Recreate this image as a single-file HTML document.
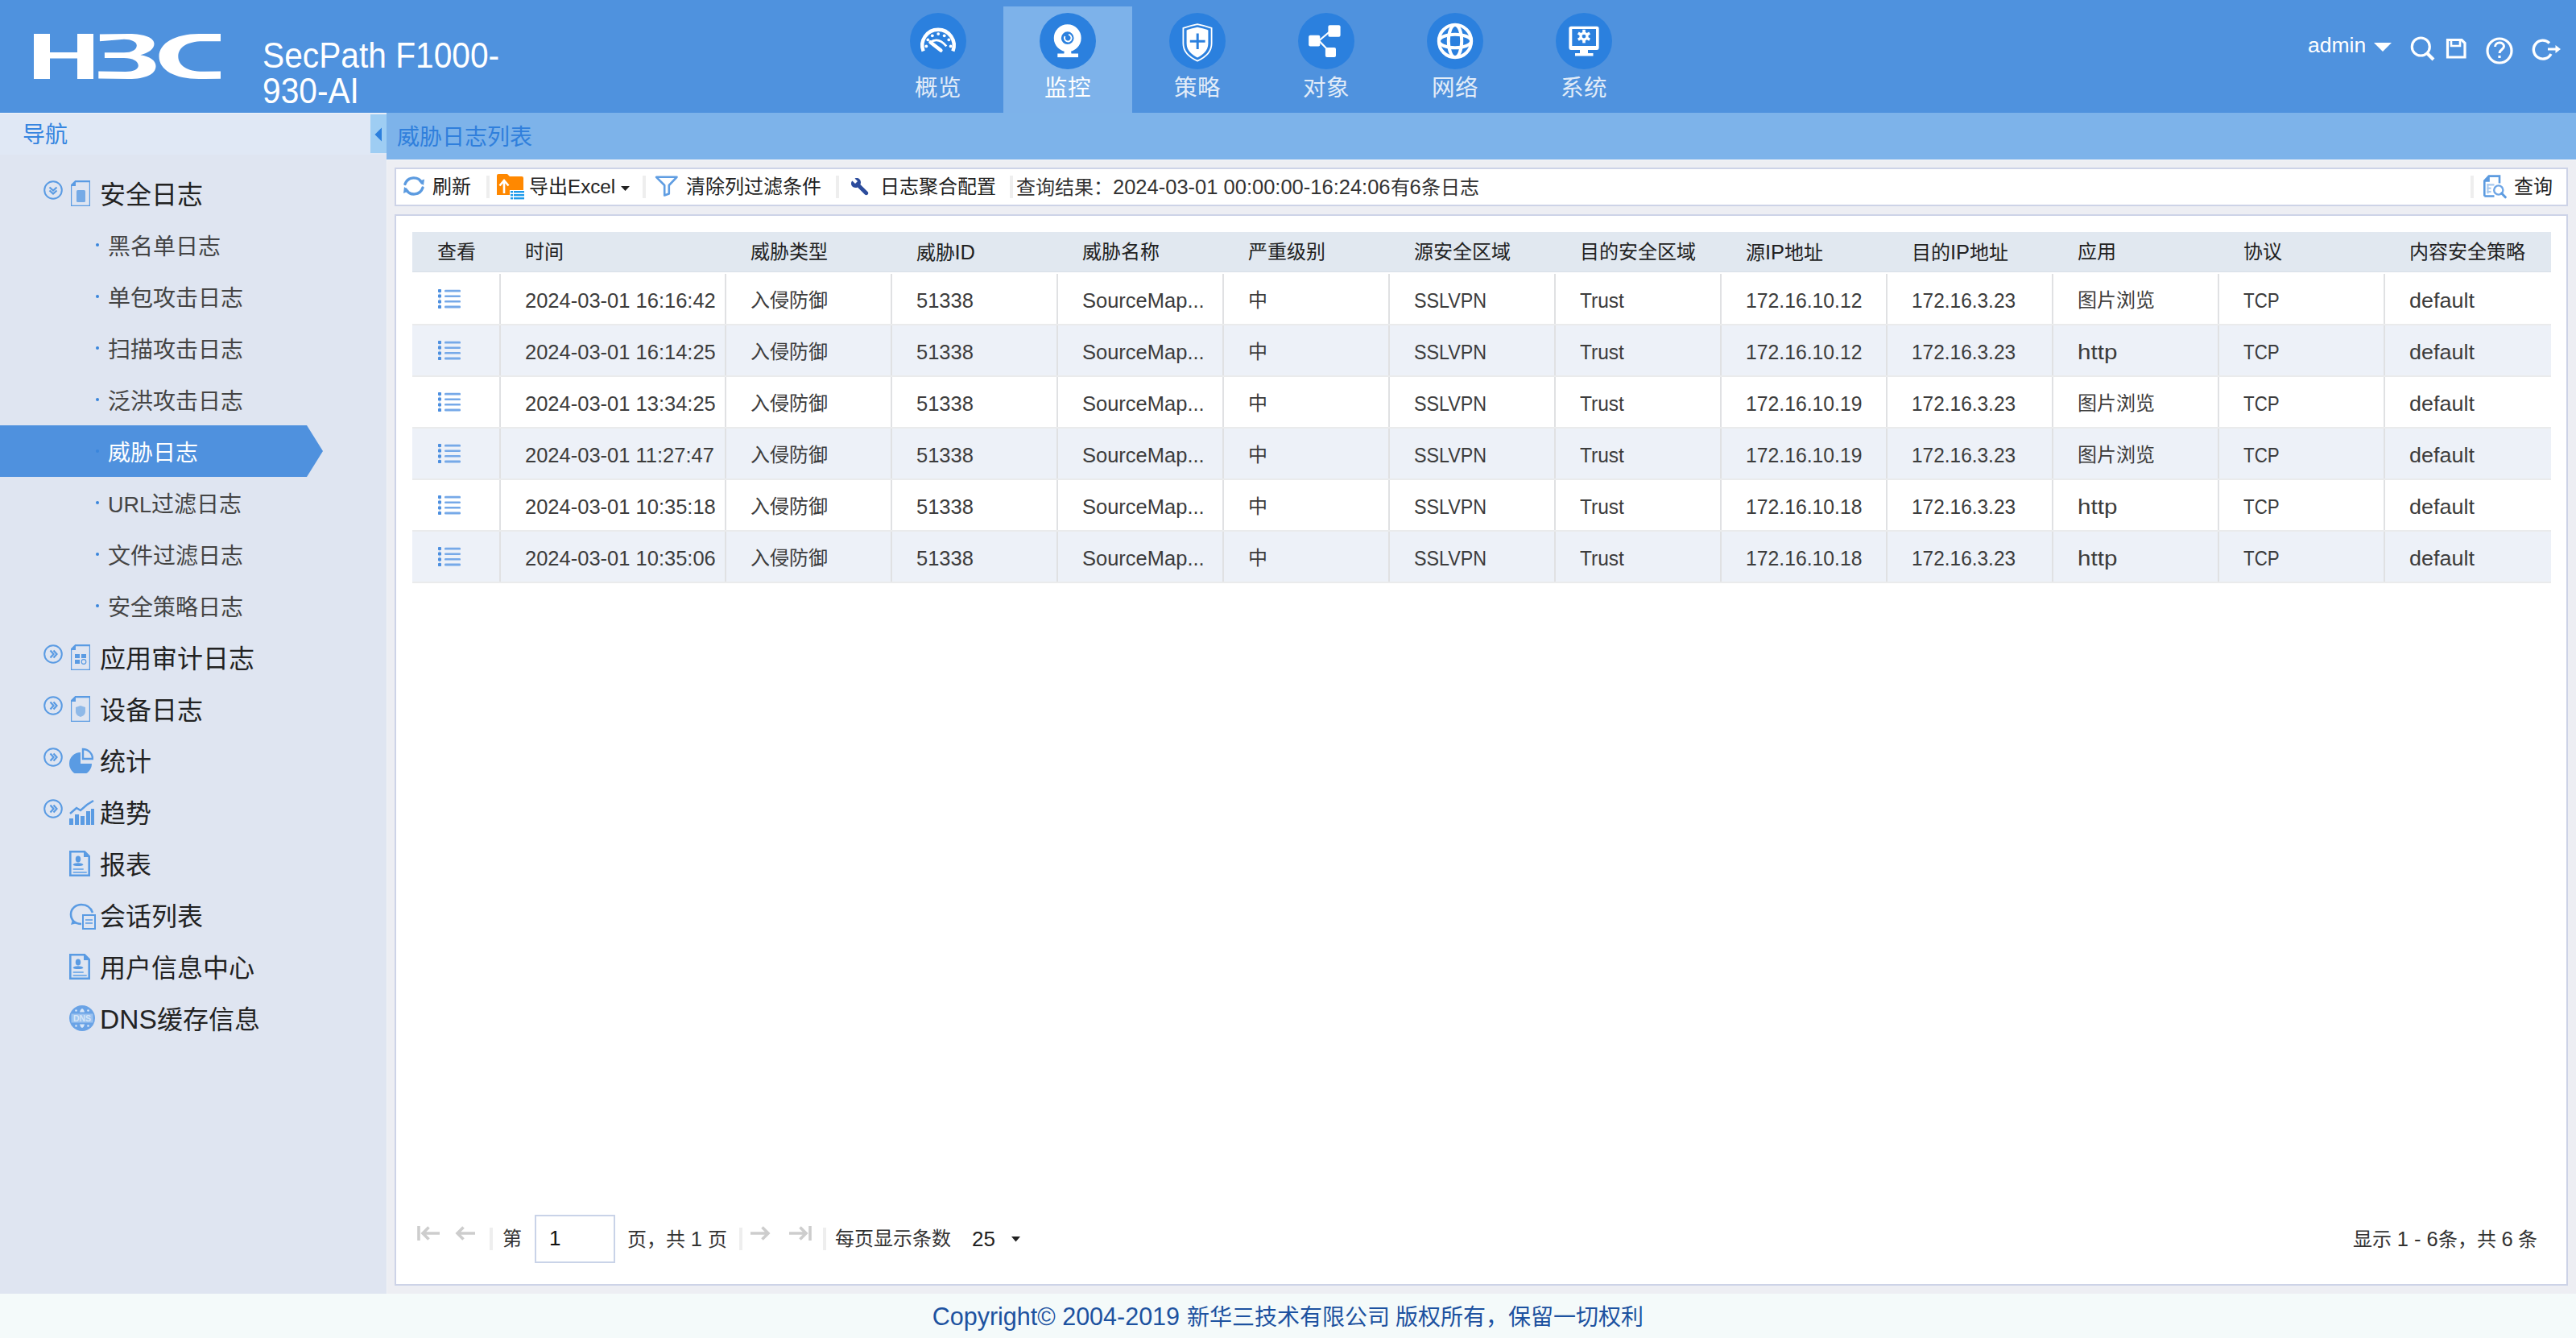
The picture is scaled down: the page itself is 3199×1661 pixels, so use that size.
<!DOCTYPE html>
<html lang="zh-CN"><head><meta charset="utf-8"><style>
*{box-sizing:border-box;margin:0;padding:0}
html,body{width:3199px;height:1661px;overflow:hidden}
body{position:relative;background:#EDEEF3;font-family:"Liberation Sans",sans-serif;color:#333}
.a{position:absolute;white-space:nowrap}
#hdr{left:0;top:0;width:3199px;height:140px;background:#4F92DE}
.tabon{left:1246px;top:8px;width:160px;height:132px;background:#7DB2EA}
.tlab{top:90.5px;width:160px;text-align:center;font-size:28.5px;line-height:36px;color:#E2ECF8}
#side{left:0;top:140px;width:480px;height:1466px;background:#DFE5F1}
#navh{left:0;top:140px;width:480px;height:52px;background:#E0E8F5;border-top:1px solid #EEF2F8}
#navtxt{left:28px;top:150px;font-size:28px;line-height:36px;color:#3585E0}
#colbtn{left:460px;top:142px;width:20px;height:48px;background:#9ECDF3}
#ttl{left:480px;top:140px;width:2719px;height:58px;background:#7DB3EA}
#ttltxt{left:493px;top:153px;font-size:28px;line-height:36px;color:#2F7FDC}
#ttlline{left:480px;top:198px;width:2719px;height:1px;background:#F4F4F7}
#sidel{left:480px;top:140px;width:1px;height:1466px;background:#F2F3F6}
#tb{left:490px;top:208px;width:2699px;height:48px;background:#fff;border:2px solid #CDD3E7}
#panel{left:490px;top:266px;width:2699px;height:1330px;background:#fff;border:2px solid #CDD3E7}
#footer{left:0;top:1606px;width:3199px;height:55px;background:#F4FAFA}
#foottxt{left:0;top:1616px;width:3199px;text-align:center;font-size:28px;line-height:36px;color:#1D52A0}
.sh{font-size:32px;line-height:40px;color:#222}
.si{font-size:28px;line-height:36px;color:#444}
.dot{width:4px;height:4px;border-radius:50%;background:#3C87DD}
.tbt{font-size:24px;line-height:32px;color:#222;top:216px}
.sep{width:4px;height:28px;background:#EEEEEE;top:218px}
.th{font-size:24px;line-height:32px;color:#222;top:297px}
.td{font-size:24px;line-height:32px;color:#3C3C3C}
.lat{font-size:25.5px}
.pg{font-size:24px;line-height:32px;color:#333;top:1522px}
</style></head><body>
<div id="hdr" class="a"></div>
<svg class="a" style="left:42px;top:42px" width="232" height="56" viewBox="0 0 232 56">
<path fill="#fff" d="M0,0H20V23.1H54V0H74V56H54V30.4H20V56H0Z"/>
<path fill="#fff" d="M81.9,0.5L118,0C138,0 149.5,5 149.5,12.5C149.5,19 142,24 132.3,26.2C144,28 151.5,33 151.5,40C151.5,50 139,56 118,56L80.3,55.5L80.3,46.5L114,47C124,47 129.8,44 129.8,39.5C129.8,34 123,30 112,30L87.9,29.9L87.9,23.3L112,23.3C122,23.3 127.8,19.5 127.8,14.5C127.8,10 121,6.8 112,6.8L81.9,9.2Z"/>
<path fill="#fff" d="M232,0L205,0C175,0 155.5,12 155.5,28C155.5,45 175,56 205,56L232,55.7L232,46.4L210,46.8C190,46.8 179.3,39 179.3,28C179.3,17 190,9.2 210,9.2L232,9.2Z"/>
</svg>
<div class="a" style="left:326px;top:47px;font-size:44px;line-height:43.5px;color:#fff;transform:scaleX(0.925);transform-origin:0 0">SecPath F1000-<br>930-AI</div>
<div class="a tabon"></div>
<svg class="a" style="left:1130px;top:16px" width="70" height="70" viewBox="0 0 70 70"><circle cx="35" cy="35" r="35" fill="#2B80DE"/><path d="M16.6,47.5 A19.7,19.7 0 1 1 53.4,47.5" fill="none" stroke="#fff" stroke-width="4.4"/>
 <g fill="#fff"><circle cx="20.3" cy="41.4" r="1.9"/><circle cx="22.3" cy="33.4" r="1.9"/><circle cx="27.8" cy="28.3" r="1.9"/><circle cx="35.2" cy="26.1" r="1.9"/><circle cx="42.7" cy="28.3" r="1.9"/><circle cx="48.3" cy="33.4" r="1.9"/><circle cx="50.6" cy="41.4" r="1.9"/></g>
 <path d="M24.8,36.9 Q35,29 45.3,41.4" fill="none" stroke="#fff" stroke-width="2.6"/>
 <path d="M25.5,36.5 L38.4,46.5" stroke="#fff" stroke-width="4.5" stroke-linecap="round"/></svg>
<div class="a tlab" style="left:1085px">概览</div>
<svg class="a" style="left:1291px;top:16px" width="70" height="70" viewBox="0 0 70 70"><circle cx="35" cy="35" r="35" fill="#2B80DE"/><circle cx="34.7" cy="31.2" r="12.4" fill="none" stroke="#fff" stroke-width="9.1"/>
 <path d="M31.5,29 A4.3,4.3 0 1 0 36,26.9" fill="none" stroke="#fff" stroke-width="1.9"/>
 <path d="M30.9,46 H38.9 L39.5,51 H30.3 Z" fill="#fff"/><rect x="22.3" y="50.5" width="25.7" height="4.6" fill="#fff"/></svg>
<div class="a tlab" style="left:1246px;color:#fff">监控</div>
<svg class="a" style="left:1452px;top:16px" width="70" height="70" viewBox="0 0 70 70"><circle cx="35" cy="35" r="35" fill="#2B80DE"/><path d="M35,14.2 C40,15.2 47,17 52.6,18.8 V38 C52.6,49 43,56 35,59.6 C27,56 17.4,49 17.4,38 V18.8 C23,17 30,15.2 35,14.2 Z" fill="none" stroke="#fff" stroke-width="1.8"/>
 <path d="M35,17.8 C39,18.6 44,20 48.4,21.4 V38 C48.4,47 41,52.8 35,55.4 C29,52.8 21.6,47 21.6,38 V21.4 C26,20 31,18.6 35,17.8 Z" fill="#fff"/>
 <path d="M35.2,25.5 V45 M25.8,35.2 H44.6" stroke="#2B80DE" stroke-width="3"/></svg>
<div class="a tlab" style="left:1407px">策略</div>
<svg class="a" style="left:1612px;top:16px" width="70" height="70" viewBox="0 0 70 70"><circle cx="35" cy="35" r="35" fill="#2B80DE"/><path d="M26,34.5 L39,23.5 M26,34.5 L37,46" stroke="#fff" stroke-width="2.2"/>
 <rect x="37.4" y="15.2" width="15.2" height="14.6" rx="2" fill="#fff"/>
 <rect x="13.2" y="27.8" width="14.1" height="13.6" rx="2" fill="#fff"/>
 <rect x="33.9" y="43" width="13.1" height="12" rx="2" fill="#fff"/></svg>
<div class="a tlab" style="left:1567px">对象</div>
<svg class="a" style="left:1772px;top:16px" width="70" height="70" viewBox="0 0 70 70"><circle cx="35" cy="35" r="35" fill="#2B80DE"/><circle cx="35" cy="35" r="20.2" fill="none" stroke="#fff" stroke-width="4"/>
 <ellipse cx="35" cy="35" rx="8.2" ry="20" fill="none" stroke="#fff" stroke-width="4"/>
 <ellipse cx="35" cy="35" rx="20" ry="8.2" fill="none" stroke="#fff" stroke-width="4"/></svg>
<div class="a tlab" style="left:1727px">网络</div>
<svg class="a" style="left:1932px;top:16px" width="70" height="70" viewBox="0 0 70 70"><circle cx="35" cy="35" r="35" fill="#2B80DE"/><path d="M19,16.7 H51 A2.6,2.6 0 0 1 53.6,19.3 V43.5 A2.6,2.6 0 0 1 51,46 H19 A2.6,2.6 0 0 1 16.4,43.5 V19.3 A2.6,2.6 0 0 1 19,16.7 Z M20.3,20 V41 H50 V20 Z" fill="#fff" fill-rule="evenodd"/>
 <rect x="30" y="45" width="10" height="6" fill="#fff"/><rect x="24" y="50" width="22.5" height="3.5" fill="#fff"/>
 <g transform="translate(35,29.1)"><circle r="5.6" fill="#fff"/><g fill="#fff"><rect x="-1.8" y="-8.3" width="3.6" height="16.6"/><rect x="-1.8" y="-8.3" width="3.6" height="16.6" transform="rotate(60)"/><rect x="-1.8" y="-8.3" width="3.6" height="16.6" transform="rotate(120)"/></g><circle r="2.4" fill="#2B80DE"/></g></svg>
<div class="a tlab" style="left:1887px">系统</div>
<div class="a" style="left:2866px;top:40px;font-size:26.5px;line-height:32px;color:#fff">admin</div>
<svg class="a" style="left:2948px;top:53px" width="22" height="11" viewBox="0 0 22 11"><path d="M0,0H22L11,11Z" fill="#fff"/></svg>
<svg class="a" style="left:2990px;top:42px" width="200" height="40" viewBox="0 0 200 40">
<g fill="none" stroke="#fff" stroke-width="3.2">
<circle cx="16.3" cy="16" r="11"/><path d="M24,24 L32,32" stroke-width="4"/>
<path d="M49.5,7.5 H67 L71,11.5 V29 H49.5 Z"/><path d="M54,8 V15 H65 V8" stroke-width="2.6"/>
<circle cx="114" cy="21" r="15"/>
<path d="M176,11.5 A11.5,11.5 0 1 0 178,25" stroke-width="3.4"/><path d="M174,19 H185" stroke-width="3"/>
</g>
<path d="M114,30 V27" stroke="#fff" stroke-width="3.2"/>
<path d="M108.5,16 C108.5,9.5 119.5,9.5 119.5,15.5 C119.5,19.5 114,19.5 114,24" fill="none" stroke="#fff" stroke-width="3"/>
<path d="M183.5,14 L190,19 L183.5,24 Z" fill="#fff"/>
</svg>
<div id="side" class="a"></div>
<div id="navh" class="a"></div>
<div id="navtxt" class="a">导航</div>
<div id="colbtn" class="a"></div>
<svg class="a" style="left:465px;top:158px" width="10" height="18" viewBox="0 0 10 18"><path d="M9,0.5 V17.5 L0.5,9 Z" fill="#2C7FDD"/></svg>
<div id="sidel" class="a"></div>
<svg class="a" style="left:54px;top:224px" width="24" height="24" viewBox="0 0 24 24"><circle cx="12" cy="12" r="10.8" fill="none" stroke="#5A9BE3" stroke-width="2"/><path d="M7.5,8.5 L12,12.5 L16.5,8.5 M7.5,12.5 L12,16.5 L16.5,12.5" fill="none" stroke="#5A9BE3" stroke-width="2.2"/></svg>
<svg class="a" style="left:88px;top:224px" width="24" height="32" viewBox="0 0 24 32"><path d="M6,1 H24 V32 H0 V7 Z" fill="none" stroke="#5A9BE3" stroke-width="2.4"/><path d="M1,7 L6,1 V7 Z" fill="#5A9BE3"/><rect x="7" y="12" width="11" height="15" rx="1.5" fill="#5A9BE3" opacity="0.8"/></svg>
<div class="a sh" style="left:124px;top:222px">安全日志</div>
<div class="a dot" style="left:119px;top:302px;background:#3A86DC"></div>
<div class="a si" style="left:134px;top:289px;color:#444">黑名单日志</div>
<div class="a dot" style="left:119px;top:366px;background:#3A86DC"></div>
<div class="a si" style="left:134px;top:353px;color:#444">单包攻击日志</div>
<div class="a dot" style="left:119px;top:430px;background:#3A86DC"></div>
<div class="a si" style="left:134px;top:417px;color:#444">扫描攻击日志</div>
<div class="a dot" style="left:119px;top:494px;background:#3A86DC"></div>
<div class="a si" style="left:134px;top:481px;color:#444">泛洪攻击日志</div>
<svg class="a" style="left:0;top:528px" width="402" height="64" viewBox="0 0 402 64"><path d="M0,0 H381 L401,32 L381,64 H0 Z" fill="#4F91DE"/></svg>
<div class="a dot" style="left:119px;top:558px;background:#3A86DC"></div>
<div class="a si" style="left:134px;top:545px;color:#fff">威胁日志</div>
<div class="a dot" style="left:119px;top:622px;background:#3A86DC"></div>
<div class="a si" style="left:134px;top:609px;color:#444"><span style="font-size:27px">URL</span>过滤日志</div>
<div class="a dot" style="left:119px;top:686px;background:#3A86DC"></div>
<div class="a si" style="left:134px;top:673px;color:#444">文件过滤日志</div>
<div class="a dot" style="left:119px;top:750px;background:#3A86DC"></div>
<div class="a si" style="left:134px;top:737px;color:#444">安全策略日志</div>
<svg class="a" style="left:54px;top:800px" width="24" height="24" viewBox="0 0 24 24"><circle cx="12" cy="12" r="10.8" fill="none" stroke="#5A9BE3" stroke-width="2"/><path d="M8.5,7.5 L12.5,12 L8.5,16.5 M12.5,7.5 L16.5,12 L12.5,16.5" fill="none" stroke="#5A9BE3" stroke-width="2.2"/></svg>
<svg class="a" style="left:88px;top:800px" width="24" height="32" viewBox="0 0 24 32"><path d="M6,1 H24 V32 H0 V7 Z" fill="none" stroke="#5A9BE3" stroke-width="2.4"/><path d="M1,7 L6,1 V7 Z" fill="#5A9BE3"/><rect x="5" y="12" width="6" height="5" fill="#5A9BE3"/><rect x="13" y="12" width="6" height="5" fill="#5A9BE3"/><rect x="5" y="19" width="6" height="5" fill="#5A9BE3"/><circle cx="16" cy="21.5" r="2.8" fill="none" stroke="#5A9BE3" stroke-width="1.2"/></svg>
<div class="a sh" style="left:124px;top:798px">应用审计日志</div>
<svg class="a" style="left:54px;top:864px" width="24" height="24" viewBox="0 0 24 24"><circle cx="12" cy="12" r="10.8" fill="none" stroke="#5A9BE3" stroke-width="2"/><path d="M8.5,7.5 L12.5,12 L8.5,16.5 M12.5,7.5 L16.5,12 L12.5,16.5" fill="none" stroke="#5A9BE3" stroke-width="2.2"/></svg>
<svg class="a" style="left:88px;top:864px" width="24" height="32" viewBox="0 0 24 32"><path d="M6,1 H24 V32 H0 V7 Z" fill="none" stroke="#5A9BE3" stroke-width="2.4"/><path d="M1,7 L6,1 V7 Z" fill="#5A9BE3"/><path d="M12,12 L18,14 V19 C18,23 15,25 12,26 C9,25 6,23 6,19 V14 Z" fill="#5A9BE3" opacity="0.6"/></svg>
<div class="a sh" style="left:124px;top:862px">设备日志</div>
<svg class="a" style="left:54px;top:928px" width="24" height="24" viewBox="0 0 24 24"><circle cx="12" cy="12" r="10.8" fill="none" stroke="#5A9BE3" stroke-width="2"/><path d="M8.5,7.5 L12.5,12 L8.5,16.5 M12.5,7.5 L16.5,12 L12.5,16.5" fill="none" stroke="#5A9BE3" stroke-width="2.2"/></svg>
<svg class="a" style="left:86px;top:928px" width="30" height="32" viewBox="0 0 30 32"><path d="M14,6 A14,14 0 1 0 28,20 H14 Z" fill="#5A9BE3"/><path d="M17,2 A12,12 0 0 1 29,14 H17 Z" fill="none" stroke="#5A9BE3" stroke-width="2.4"/></svg>
<div class="a sh" style="left:124px;top:926px">统计</div>
<svg class="a" style="left:54px;top:992px" width="24" height="24" viewBox="0 0 24 24"><circle cx="12" cy="12" r="10.8" fill="none" stroke="#5A9BE3" stroke-width="2"/><path d="M8.5,7.5 L12.5,12 L8.5,16.5 M12.5,7.5 L16.5,12 L12.5,16.5" fill="none" stroke="#5A9BE3" stroke-width="2.2"/></svg>
<svg class="a" style="left:86px;top:992px" width="32" height="32" viewBox="0 0 32 32"><path d="M1,18 L9,11 L14,14 L22,7 L30,2" fill="none" stroke="#5A9BE3" stroke-width="2.4"/><path d="M0,24 H5 V32 H0 Z M7,19 H12 V32 H7 Z M14,21 H19 V32 H14 Z M21,15 H26 V32 H21 Z M27,12 H31 V32 H27 Z" fill="#5A9BE3"/></svg>
<div class="a sh" style="left:124px;top:990px">趋势</div>
<svg class="a" style="left:86px;top:1056px" width="26" height="32" viewBox="0 0 26 32"><path d="M1.3,1.3 H19 L24.7,7 V30.7 H1.3 Z" fill="none" stroke="#5A9BE3" stroke-width="2.6"/><path d="M18,0.5 L25.5,8 H18 Z" fill="#5A9BE3"/><ellipse cx="11" cy="10.5" rx="3.2" ry="4" fill="#5A9BE3"/><path d="M4.5,17.5 C6,14.5 16,14.5 17.5,17.5 C16,19.5 6,19.5 4.5,17.5 Z" fill="#5A9BE3"/><rect x="4.5" y="22" width="13.5" height="2" rx="1" fill="#7CB0EA"/><rect x="4.5" y="26" width="17.5" height="2" rx="1" fill="#7CB0EA"/></svg>
<div class="a sh" style="left:124px;top:1054px">报表</div>
<svg class="a" style="left:86px;top:1120px" width="34" height="34" viewBox="0 0 34 34"><path d="M15,27 C7,27 2,22 2,15 C2,8 8,3 15,3 C22,3 27,7 29,13" fill="none" stroke="#5A9BE3" stroke-width="2.6"/><path d="M4,22 L2,28 L10,26 Z" fill="#5A9BE3"/><rect x="17" y="16" width="15" height="17" fill="none" stroke="#5A9BE3" stroke-width="2"/><path d="M20,22 H29 M20,26 H29" stroke="#5A9BE3" stroke-width="1.6"/></svg>
<div class="a sh" style="left:124px;top:1118px">会话列表</div>
<svg class="a" style="left:86px;top:1184px" width="26" height="32" viewBox="0 0 26 32"><path d="M1.3,1.3 H19 L24.7,7 V30.7 H1.3 Z" fill="none" stroke="#5A9BE3" stroke-width="2.6"/><path d="M18,0.5 L25.5,8 H18 Z" fill="#5A9BE3"/><ellipse cx="11" cy="10.5" rx="3.2" ry="4" fill="#5A9BE3"/><path d="M4.5,17.5 C6,14.5 16,14.5 17.5,17.5 C16,19.5 6,19.5 4.5,17.5 Z" fill="#5A9BE3"/><rect x="4.5" y="22" width="13.5" height="2" rx="1" fill="#7CB0EA"/><rect x="4.5" y="26" width="17.5" height="2" rx="1" fill="#7CB0EA"/></svg>
<div class="a sh" style="left:124px;top:1182px">用户信息中心</div>
<svg class="a" style="left:86px;top:1248px" width="32" height="32" viewBox="0 0 32 32"><circle cx="16" cy="16" r="16" fill="#6AA3E6"/><rect x="2.5" y="10.5" width="27" height="11" fill="#9CC3EF"/><text x="16" y="20" font-size="10.5" text-anchor="middle" fill="#D5E6F8" font-family="Liberation Sans" font-weight="bold">DNS</text><g fill="#D8E7F8"><circle cx="8.5" cy="6.5" r="1.3"/><circle cx="23.5" cy="6.5" r="1.3"/><circle cx="8.5" cy="25.5" r="1.3"/><circle cx="23.5" cy="25.5" r="1.3"/><path d="M13,8.5 Q14,4.5 16,4 V8.5 Z M19,8.5 Q18,4.5 16,4 V8.5 Z"/><path d="M13,23.5 Q14,27.5 16,28 V23.5 Z M19,23.5 Q18,27.5 16,28 V23.5 Z"/></g></svg>
<div class="a sh" style="left:124px;top:1246px"><span style="font-size:33.5px">DNS</span>缓存信息</div>
<div id="ttl" class="a"></div>
<div id="ttltxt" class="a">威胁日志列表</div>
<div id="ttlline" class="a"></div>
<div id="tb" class="a"></div>
<div id="panel" class="a"></div>
<svg class="a" style="left:499px;top:216px" width="30" height="30" viewBox="0 0 30 30">
<path d="M4,12.5 A11.5,11.5 0 0 1 25,11" fill="none" stroke="#5C9BE0" stroke-width="3.4" stroke-linecap="round"/>
<path d="M26,17 A11.5,11.5 0 0 1 5,19" fill="none" stroke="#5C9BE0" stroke-width="3.4" stroke-linecap="round"/>
<path d="M21,9 L28,6.5 L27,14 Z" fill="#5C9BE0"/><path d="M9,21 L2,24 L3,16 Z" fill="#5C9BE0"/>
</svg>
<div class="a tbt" style="left:537px">刷新</div>
<div class="a sep" style="left:604px"></div>
<svg class="a" style="left:617px;top:216px" width="34" height="32" viewBox="0 0 34 32">
<path d="M0,2 A2,2 0 0 1 2,0 H13 L16,3 H31 A2,2 0 0 1 33,5 V26 H0 Z" fill="#FF8800"/>
<path d="M9,24 V9 M3.5,14.5 L9,8 L14.5,14.5" fill="none" stroke="#fff" stroke-width="2.6"/>
<rect x="16" y="20" width="18" height="12" fill="#fff"/>
<g fill="#1E9BEA"><rect x="17" y="21" width="3" height="2.4"/><rect x="21" y="21" width="13" height="2.4"/><rect x="17" y="25" width="3" height="2.4"/><rect x="21" y="25" width="13" height="2.4"/><rect x="17" y="29" width="3" height="2.4"/><rect x="21" y="29" width="13" height="2.4"/></g>
</svg>
<div class="a tbt" style="left:657px">导出<span class="lat" style="font-size:24.2px">Excel</span></div>
<svg class="a" style="left:770.5px;top:231px" width="11" height="6" viewBox="0 0 11 6"><path d="M0,0H11L5.5,6Z" fill="#222"/></svg>
<div class="a sep" style="left:798px"></div>
<svg class="a" style="left:812px;top:217px" width="32" height="28" viewBox="0 0 32 28"><path d="M3,2.8 H28.5 L18.8,13 V23.5 L13.2,25.5 V13 Z" fill="none" stroke="#5F9DE2" stroke-width="2.6" stroke-linejoin="round"/></svg>
<div class="a tbt" style="left:852px">清除列过滤条件</div>
<div class="a sep" style="left:1038px"></div>
<svg class="a" style="left:1056px;top:220px" width="24" height="24" viewBox="0 0 24 24"><path d="M2.5,4.5 L6,8 L9,5 L5.5,1.5 C9,0 13,2 13,6.5 C13,7.5 12.8,8.3 12.4,9 L21.5,18 C22.5,19 22.5,20.5 21.5,21.5 C20.5,22.5 19,22.5 18,21.5 L9,12.5 C8.3,12.9 7.5,13 6.5,13 C2,13 0,9 1.5,5.5 Z" fill="#2C4C9C"/></svg>
<div class="a tbt" style="left:1093px">日志聚合配置</div>
<div class="a sep" style="left:1254px"></div>
<div class="a tbt" style="left:1262px;color:#333">查询结果：<span class="lat" style="font-size:25.5px">2024-03-01 00:00:00-16:24:06</span>有<span class="lat" style="font-size:25.5px">6</span>条日志</div>
<div class="a sep" style="left:3068px"></div>
<svg class="a" style="left:3083px;top:217px" width="30" height="30" viewBox="0 0 30 30">
<path d="M2.3,26.5 V7.5 L7.8,1.6 H21 V10.5 M2.3,26.5 H14.5" fill="none" stroke="#5C9BE0" stroke-width="2.6"/>
<path d="M1,8.8 L8.8,0.6 V8.8 Z" fill="#5C9BE0"/>
<g fill="#A6C8EE"><rect x="5.5" y="11.3" width="9" height="2.2"/><rect x="5.5" y="15.6" width="5" height="2.2"/><rect x="5.5" y="19.9" width="5" height="2.2"/><rect x="5.5" y="11.3" width="2" height="12"/></g>
<circle cx="19.8" cy="19" r="5.6" fill="#fff" stroke="#6FA6E6" stroke-width="2.4"/><path d="M23.6,23 L28.3,27.8" stroke="#5C9BE0" stroke-width="3" stroke-linecap="round"/>
</svg>
<div class="a tbt" style="left:3122px">查询</div>
<div class="a" style="left:512px;top:288px;width:2656px;height:50px;background:#E1E8F0"></div>
<div class="a th" style="left:543px">查看</div>
<div class="a th" style="left:651.5px">时间</div>
<div class="a th" style="left:931.5px">威胁类型</div>
<div class="a th" style="left:1137.5px">威胁<span class="lat">ID</span></div>
<div class="a th" style="left:1343.5px">威胁名称</div>
<div class="a th" style="left:1549.5px">严重级别</div>
<div class="a th" style="left:1756px">源安全区域</div>
<div class="a th" style="left:1962px">目的安全区域</div>
<div class="a th" style="left:2168px">源<span class="lat">IP</span>地址</div>
<div class="a th" style="left:2374px">目的<span class="lat">IP</span>地址</div>
<div class="a th" style="left:2580px">应用</div>
<div class="a th" style="left:2786px">协议</div>
<div class="a th" style="left:2992px">内容安全策略</div>
<div class="a" style="left:512px;top:337px;width:2656px;height:1px;background:#D8DEE6"></div>
<div class="a" style="left:512px;top:340px;width:2656px;height:62px;background:#FFFFFF"></div>
<div class="a" style="left:512px;top:402px;width:2656px;height:2px;background:#EAEBEC"></div>
<div class="a" style="left:620px;top:340px;width:2px;height:62px;background:#E0E1E3"></div>
<div class="a" style="left:900px;top:340px;width:2px;height:62px;background:#E0E1E3"></div>
<div class="a" style="left:1106px;top:340px;width:2px;height:62px;background:#E0E1E3"></div>
<div class="a" style="left:1312px;top:340px;width:2px;height:62px;background:#E0E1E3"></div>
<div class="a" style="left:1518px;top:340px;width:2px;height:62px;background:#E0E1E3"></div>
<div class="a" style="left:1724px;top:340px;width:2px;height:62px;background:#E0E1E3"></div>
<div class="a" style="left:1930px;top:340px;width:2px;height:62px;background:#E0E1E3"></div>
<div class="a" style="left:2136px;top:340px;width:2px;height:62px;background:#E0E1E3"></div>
<div class="a" style="left:2342px;top:340px;width:2px;height:62px;background:#E0E1E3"></div>
<div class="a" style="left:2548px;top:340px;width:2px;height:62px;background:#E0E1E3"></div>
<div class="a" style="left:2754px;top:340px;width:2px;height:62px;background:#E0E1E3"></div>
<div class="a" style="left:2960px;top:340px;width:2px;height:62px;background:#E0E1E3"></div>
<svg class="a" style="left:544px;top:359px" width="29" height="25" viewBox="0 0 29 25"><rect x="1.5" y="3" width="1" height="18" fill="#B5D0F2"/><g fill="#4C8FE0"><rect x="0" y="0" width="4" height="4" rx="0.8"/><rect x="0" y="6.6" width="4" height="4" rx="0.8"/><rect x="0" y="13.4" width="4" height="4" rx="0.8"/><rect x="0" y="20" width="4" height="4" rx="0.8"/></g><g fill="#76A9E8"><rect x="8" y="0.8" width="20" height="2.8" rx="1.2"/><rect x="8" y="7.4" width="20" height="2.6" rx="1.2"/><rect x="8" y="14" width="20" height="2.6" rx="1.2"/><rect x="8" y="20.6" width="20" height="2.8" rx="1.2"/></g></svg>
<div class="a td" style="left:652px;top:356.5px"><span class="lat">2024-03-01 16:16:42</span></div>
<div class="a td" style="left:932px;top:356.5px">入侵防御</div>
<div class="a td" style="left:1138px;top:356.5px"><span class="lat">51338</span></div>
<div class="a td" style="left:1344px;top:356.5px"><span class="lat">SourceMap...</span></div>
<div class="a td" style="left:1550px;top:356.5px">中</div>
<div class="a td" style="left:1756px;top:356.5px"><span class="lat" style="display:inline-block;transform:scaleX(0.913);transform-origin:0 0">SSLVPN</span></div>
<div class="a td" style="left:1962px;top:356.5px"><span class="lat" style="display:inline-block;transform:scaleX(0.96);transform-origin:0 0">Trust</span></div>
<div class="a td" style="left:2168px;top:356.5px"><span class="lat" style="display:inline-block;transform:scaleX(0.97);transform-origin:0 0">172.16.10.12</span></div>
<div class="a td" style="left:2374px;top:356.5px"><span class="lat" style="display:inline-block;transform:scaleX(0.958);transform-origin:0 0">172.16.3.23</span></div>
<div class="a td" style="left:2580px;top:356.5px">图片浏览</div>
<div class="a td" style="left:2786px;top:356.5px"><span class="lat" style="display:inline-block;transform:scaleX(0.877);transform-origin:0 0">TCP</span></div>
<div class="a td" style="left:2992px;top:356.5px"><span class="lat" style="display:inline-block;transform:scaleX(1.057);transform-origin:0 0">default</span></div>
<div class="a" style="left:512px;top:404px;width:2656px;height:62px;background:#EDF1F8"></div>
<div class="a" style="left:512px;top:466px;width:2656px;height:2px;background:#EAEBEC"></div>
<div class="a" style="left:620px;top:404px;width:2px;height:62px;background:#E0E1E3"></div>
<div class="a" style="left:900px;top:404px;width:2px;height:62px;background:#E0E1E3"></div>
<div class="a" style="left:1106px;top:404px;width:2px;height:62px;background:#E0E1E3"></div>
<div class="a" style="left:1312px;top:404px;width:2px;height:62px;background:#E0E1E3"></div>
<div class="a" style="left:1518px;top:404px;width:2px;height:62px;background:#E0E1E3"></div>
<div class="a" style="left:1724px;top:404px;width:2px;height:62px;background:#E0E1E3"></div>
<div class="a" style="left:1930px;top:404px;width:2px;height:62px;background:#E0E1E3"></div>
<div class="a" style="left:2136px;top:404px;width:2px;height:62px;background:#E0E1E3"></div>
<div class="a" style="left:2342px;top:404px;width:2px;height:62px;background:#E0E1E3"></div>
<div class="a" style="left:2548px;top:404px;width:2px;height:62px;background:#E0E1E3"></div>
<div class="a" style="left:2754px;top:404px;width:2px;height:62px;background:#E0E1E3"></div>
<div class="a" style="left:2960px;top:404px;width:2px;height:62px;background:#E0E1E3"></div>
<svg class="a" style="left:544px;top:423px" width="29" height="25" viewBox="0 0 29 25"><rect x="1.5" y="3" width="1" height="18" fill="#B5D0F2"/><g fill="#4C8FE0"><rect x="0" y="0" width="4" height="4" rx="0.8"/><rect x="0" y="6.6" width="4" height="4" rx="0.8"/><rect x="0" y="13.4" width="4" height="4" rx="0.8"/><rect x="0" y="20" width="4" height="4" rx="0.8"/></g><g fill="#76A9E8"><rect x="8" y="0.8" width="20" height="2.8" rx="1.2"/><rect x="8" y="7.4" width="20" height="2.6" rx="1.2"/><rect x="8" y="14" width="20" height="2.6" rx="1.2"/><rect x="8" y="20.6" width="20" height="2.8" rx="1.2"/></g></svg>
<div class="a td" style="left:652px;top:420.5px"><span class="lat">2024-03-01 16:14:25</span></div>
<div class="a td" style="left:932px;top:420.5px">入侵防御</div>
<div class="a td" style="left:1138px;top:420.5px"><span class="lat">51338</span></div>
<div class="a td" style="left:1344px;top:420.5px"><span class="lat">SourceMap...</span></div>
<div class="a td" style="left:1550px;top:420.5px">中</div>
<div class="a td" style="left:1756px;top:420.5px"><span class="lat" style="display:inline-block;transform:scaleX(0.913);transform-origin:0 0">SSLVPN</span></div>
<div class="a td" style="left:1962px;top:420.5px"><span class="lat" style="display:inline-block;transform:scaleX(0.96);transform-origin:0 0">Trust</span></div>
<div class="a td" style="left:2168px;top:420.5px"><span class="lat" style="display:inline-block;transform:scaleX(0.97);transform-origin:0 0">172.16.10.12</span></div>
<div class="a td" style="left:2374px;top:420.5px"><span class="lat" style="display:inline-block;transform:scaleX(0.958);transform-origin:0 0">172.16.3.23</span></div>
<div class="a td" style="left:2580px;top:420.5px"><span class="lat" style="display:inline-block;transform:scaleX(1.16);transform-origin:0 0">http</span></div>
<div class="a td" style="left:2786px;top:420.5px"><span class="lat" style="display:inline-block;transform:scaleX(0.877);transform-origin:0 0">TCP</span></div>
<div class="a td" style="left:2992px;top:420.5px"><span class="lat" style="display:inline-block;transform:scaleX(1.057);transform-origin:0 0">default</span></div>
<div class="a" style="left:512px;top:468px;width:2656px;height:62px;background:#FFFFFF"></div>
<div class="a" style="left:512px;top:530px;width:2656px;height:2px;background:#EAEBEC"></div>
<div class="a" style="left:620px;top:468px;width:2px;height:62px;background:#E0E1E3"></div>
<div class="a" style="left:900px;top:468px;width:2px;height:62px;background:#E0E1E3"></div>
<div class="a" style="left:1106px;top:468px;width:2px;height:62px;background:#E0E1E3"></div>
<div class="a" style="left:1312px;top:468px;width:2px;height:62px;background:#E0E1E3"></div>
<div class="a" style="left:1518px;top:468px;width:2px;height:62px;background:#E0E1E3"></div>
<div class="a" style="left:1724px;top:468px;width:2px;height:62px;background:#E0E1E3"></div>
<div class="a" style="left:1930px;top:468px;width:2px;height:62px;background:#E0E1E3"></div>
<div class="a" style="left:2136px;top:468px;width:2px;height:62px;background:#E0E1E3"></div>
<div class="a" style="left:2342px;top:468px;width:2px;height:62px;background:#E0E1E3"></div>
<div class="a" style="left:2548px;top:468px;width:2px;height:62px;background:#E0E1E3"></div>
<div class="a" style="left:2754px;top:468px;width:2px;height:62px;background:#E0E1E3"></div>
<div class="a" style="left:2960px;top:468px;width:2px;height:62px;background:#E0E1E3"></div>
<svg class="a" style="left:544px;top:487px" width="29" height="25" viewBox="0 0 29 25"><rect x="1.5" y="3" width="1" height="18" fill="#B5D0F2"/><g fill="#4C8FE0"><rect x="0" y="0" width="4" height="4" rx="0.8"/><rect x="0" y="6.6" width="4" height="4" rx="0.8"/><rect x="0" y="13.4" width="4" height="4" rx="0.8"/><rect x="0" y="20" width="4" height="4" rx="0.8"/></g><g fill="#76A9E8"><rect x="8" y="0.8" width="20" height="2.8" rx="1.2"/><rect x="8" y="7.4" width="20" height="2.6" rx="1.2"/><rect x="8" y="14" width="20" height="2.6" rx="1.2"/><rect x="8" y="20.6" width="20" height="2.8" rx="1.2"/></g></svg>
<div class="a td" style="left:652px;top:484.5px"><span class="lat">2024-03-01 13:34:25</span></div>
<div class="a td" style="left:932px;top:484.5px">入侵防御</div>
<div class="a td" style="left:1138px;top:484.5px"><span class="lat">51338</span></div>
<div class="a td" style="left:1344px;top:484.5px"><span class="lat">SourceMap...</span></div>
<div class="a td" style="left:1550px;top:484.5px">中</div>
<div class="a td" style="left:1756px;top:484.5px"><span class="lat" style="display:inline-block;transform:scaleX(0.913);transform-origin:0 0">SSLVPN</span></div>
<div class="a td" style="left:1962px;top:484.5px"><span class="lat" style="display:inline-block;transform:scaleX(0.96);transform-origin:0 0">Trust</span></div>
<div class="a td" style="left:2168px;top:484.5px"><span class="lat" style="display:inline-block;transform:scaleX(0.97);transform-origin:0 0">172.16.10.19</span></div>
<div class="a td" style="left:2374px;top:484.5px"><span class="lat" style="display:inline-block;transform:scaleX(0.958);transform-origin:0 0">172.16.3.23</span></div>
<div class="a td" style="left:2580px;top:484.5px">图片浏览</div>
<div class="a td" style="left:2786px;top:484.5px"><span class="lat" style="display:inline-block;transform:scaleX(0.877);transform-origin:0 0">TCP</span></div>
<div class="a td" style="left:2992px;top:484.5px"><span class="lat" style="display:inline-block;transform:scaleX(1.057);transform-origin:0 0">default</span></div>
<div class="a" style="left:512px;top:532px;width:2656px;height:62px;background:#EDF1F8"></div>
<div class="a" style="left:512px;top:594px;width:2656px;height:2px;background:#EAEBEC"></div>
<div class="a" style="left:620px;top:532px;width:2px;height:62px;background:#E0E1E3"></div>
<div class="a" style="left:900px;top:532px;width:2px;height:62px;background:#E0E1E3"></div>
<div class="a" style="left:1106px;top:532px;width:2px;height:62px;background:#E0E1E3"></div>
<div class="a" style="left:1312px;top:532px;width:2px;height:62px;background:#E0E1E3"></div>
<div class="a" style="left:1518px;top:532px;width:2px;height:62px;background:#E0E1E3"></div>
<div class="a" style="left:1724px;top:532px;width:2px;height:62px;background:#E0E1E3"></div>
<div class="a" style="left:1930px;top:532px;width:2px;height:62px;background:#E0E1E3"></div>
<div class="a" style="left:2136px;top:532px;width:2px;height:62px;background:#E0E1E3"></div>
<div class="a" style="left:2342px;top:532px;width:2px;height:62px;background:#E0E1E3"></div>
<div class="a" style="left:2548px;top:532px;width:2px;height:62px;background:#E0E1E3"></div>
<div class="a" style="left:2754px;top:532px;width:2px;height:62px;background:#E0E1E3"></div>
<div class="a" style="left:2960px;top:532px;width:2px;height:62px;background:#E0E1E3"></div>
<svg class="a" style="left:544px;top:551px" width="29" height="25" viewBox="0 0 29 25"><rect x="1.5" y="3" width="1" height="18" fill="#B5D0F2"/><g fill="#4C8FE0"><rect x="0" y="0" width="4" height="4" rx="0.8"/><rect x="0" y="6.6" width="4" height="4" rx="0.8"/><rect x="0" y="13.4" width="4" height="4" rx="0.8"/><rect x="0" y="20" width="4" height="4" rx="0.8"/></g><g fill="#76A9E8"><rect x="8" y="0.8" width="20" height="2.8" rx="1.2"/><rect x="8" y="7.4" width="20" height="2.6" rx="1.2"/><rect x="8" y="14" width="20" height="2.6" rx="1.2"/><rect x="8" y="20.6" width="20" height="2.8" rx="1.2"/></g></svg>
<div class="a td" style="left:652px;top:548.5px"><span class="lat">2024-03-01 11:27:47</span></div>
<div class="a td" style="left:932px;top:548.5px">入侵防御</div>
<div class="a td" style="left:1138px;top:548.5px"><span class="lat">51338</span></div>
<div class="a td" style="left:1344px;top:548.5px"><span class="lat">SourceMap...</span></div>
<div class="a td" style="left:1550px;top:548.5px">中</div>
<div class="a td" style="left:1756px;top:548.5px"><span class="lat" style="display:inline-block;transform:scaleX(0.913);transform-origin:0 0">SSLVPN</span></div>
<div class="a td" style="left:1962px;top:548.5px"><span class="lat" style="display:inline-block;transform:scaleX(0.96);transform-origin:0 0">Trust</span></div>
<div class="a td" style="left:2168px;top:548.5px"><span class="lat" style="display:inline-block;transform:scaleX(0.97);transform-origin:0 0">172.16.10.19</span></div>
<div class="a td" style="left:2374px;top:548.5px"><span class="lat" style="display:inline-block;transform:scaleX(0.958);transform-origin:0 0">172.16.3.23</span></div>
<div class="a td" style="left:2580px;top:548.5px">图片浏览</div>
<div class="a td" style="left:2786px;top:548.5px"><span class="lat" style="display:inline-block;transform:scaleX(0.877);transform-origin:0 0">TCP</span></div>
<div class="a td" style="left:2992px;top:548.5px"><span class="lat" style="display:inline-block;transform:scaleX(1.057);transform-origin:0 0">default</span></div>
<div class="a" style="left:512px;top:596px;width:2656px;height:62px;background:#FFFFFF"></div>
<div class="a" style="left:512px;top:658px;width:2656px;height:2px;background:#EAEBEC"></div>
<div class="a" style="left:620px;top:596px;width:2px;height:62px;background:#E0E1E3"></div>
<div class="a" style="left:900px;top:596px;width:2px;height:62px;background:#E0E1E3"></div>
<div class="a" style="left:1106px;top:596px;width:2px;height:62px;background:#E0E1E3"></div>
<div class="a" style="left:1312px;top:596px;width:2px;height:62px;background:#E0E1E3"></div>
<div class="a" style="left:1518px;top:596px;width:2px;height:62px;background:#E0E1E3"></div>
<div class="a" style="left:1724px;top:596px;width:2px;height:62px;background:#E0E1E3"></div>
<div class="a" style="left:1930px;top:596px;width:2px;height:62px;background:#E0E1E3"></div>
<div class="a" style="left:2136px;top:596px;width:2px;height:62px;background:#E0E1E3"></div>
<div class="a" style="left:2342px;top:596px;width:2px;height:62px;background:#E0E1E3"></div>
<div class="a" style="left:2548px;top:596px;width:2px;height:62px;background:#E0E1E3"></div>
<div class="a" style="left:2754px;top:596px;width:2px;height:62px;background:#E0E1E3"></div>
<div class="a" style="left:2960px;top:596px;width:2px;height:62px;background:#E0E1E3"></div>
<svg class="a" style="left:544px;top:615px" width="29" height="25" viewBox="0 0 29 25"><rect x="1.5" y="3" width="1" height="18" fill="#B5D0F2"/><g fill="#4C8FE0"><rect x="0" y="0" width="4" height="4" rx="0.8"/><rect x="0" y="6.6" width="4" height="4" rx="0.8"/><rect x="0" y="13.4" width="4" height="4" rx="0.8"/><rect x="0" y="20" width="4" height="4" rx="0.8"/></g><g fill="#76A9E8"><rect x="8" y="0.8" width="20" height="2.8" rx="1.2"/><rect x="8" y="7.4" width="20" height="2.6" rx="1.2"/><rect x="8" y="14" width="20" height="2.6" rx="1.2"/><rect x="8" y="20.6" width="20" height="2.8" rx="1.2"/></g></svg>
<div class="a td" style="left:652px;top:612.5px"><span class="lat">2024-03-01 10:35:18</span></div>
<div class="a td" style="left:932px;top:612.5px">入侵防御</div>
<div class="a td" style="left:1138px;top:612.5px"><span class="lat">51338</span></div>
<div class="a td" style="left:1344px;top:612.5px"><span class="lat">SourceMap...</span></div>
<div class="a td" style="left:1550px;top:612.5px">中</div>
<div class="a td" style="left:1756px;top:612.5px"><span class="lat" style="display:inline-block;transform:scaleX(0.913);transform-origin:0 0">SSLVPN</span></div>
<div class="a td" style="left:1962px;top:612.5px"><span class="lat" style="display:inline-block;transform:scaleX(0.96);transform-origin:0 0">Trust</span></div>
<div class="a td" style="left:2168px;top:612.5px"><span class="lat" style="display:inline-block;transform:scaleX(0.97);transform-origin:0 0">172.16.10.18</span></div>
<div class="a td" style="left:2374px;top:612.5px"><span class="lat" style="display:inline-block;transform:scaleX(0.958);transform-origin:0 0">172.16.3.23</span></div>
<div class="a td" style="left:2580px;top:612.5px"><span class="lat" style="display:inline-block;transform:scaleX(1.16);transform-origin:0 0">http</span></div>
<div class="a td" style="left:2786px;top:612.5px"><span class="lat" style="display:inline-block;transform:scaleX(0.877);transform-origin:0 0">TCP</span></div>
<div class="a td" style="left:2992px;top:612.5px"><span class="lat" style="display:inline-block;transform:scaleX(1.057);transform-origin:0 0">default</span></div>
<div class="a" style="left:512px;top:660px;width:2656px;height:62px;background:#EDF1F8"></div>
<div class="a" style="left:512px;top:722px;width:2656px;height:2px;background:#EAEBEC"></div>
<div class="a" style="left:620px;top:660px;width:2px;height:62px;background:#E0E1E3"></div>
<div class="a" style="left:900px;top:660px;width:2px;height:62px;background:#E0E1E3"></div>
<div class="a" style="left:1106px;top:660px;width:2px;height:62px;background:#E0E1E3"></div>
<div class="a" style="left:1312px;top:660px;width:2px;height:62px;background:#E0E1E3"></div>
<div class="a" style="left:1518px;top:660px;width:2px;height:62px;background:#E0E1E3"></div>
<div class="a" style="left:1724px;top:660px;width:2px;height:62px;background:#E0E1E3"></div>
<div class="a" style="left:1930px;top:660px;width:2px;height:62px;background:#E0E1E3"></div>
<div class="a" style="left:2136px;top:660px;width:2px;height:62px;background:#E0E1E3"></div>
<div class="a" style="left:2342px;top:660px;width:2px;height:62px;background:#E0E1E3"></div>
<div class="a" style="left:2548px;top:660px;width:2px;height:62px;background:#E0E1E3"></div>
<div class="a" style="left:2754px;top:660px;width:2px;height:62px;background:#E0E1E3"></div>
<div class="a" style="left:2960px;top:660px;width:2px;height:62px;background:#E0E1E3"></div>
<svg class="a" style="left:544px;top:679px" width="29" height="25" viewBox="0 0 29 25"><rect x="1.5" y="3" width="1" height="18" fill="#B5D0F2"/><g fill="#4C8FE0"><rect x="0" y="0" width="4" height="4" rx="0.8"/><rect x="0" y="6.6" width="4" height="4" rx="0.8"/><rect x="0" y="13.4" width="4" height="4" rx="0.8"/><rect x="0" y="20" width="4" height="4" rx="0.8"/></g><g fill="#76A9E8"><rect x="8" y="0.8" width="20" height="2.8" rx="1.2"/><rect x="8" y="7.4" width="20" height="2.6" rx="1.2"/><rect x="8" y="14" width="20" height="2.6" rx="1.2"/><rect x="8" y="20.6" width="20" height="2.8" rx="1.2"/></g></svg>
<div class="a td" style="left:652px;top:676.5px"><span class="lat">2024-03-01 10:35:06</span></div>
<div class="a td" style="left:932px;top:676.5px">入侵防御</div>
<div class="a td" style="left:1138px;top:676.5px"><span class="lat">51338</span></div>
<div class="a td" style="left:1344px;top:676.5px"><span class="lat">SourceMap...</span></div>
<div class="a td" style="left:1550px;top:676.5px">中</div>
<div class="a td" style="left:1756px;top:676.5px"><span class="lat" style="display:inline-block;transform:scaleX(0.913);transform-origin:0 0">SSLVPN</span></div>
<div class="a td" style="left:1962px;top:676.5px"><span class="lat" style="display:inline-block;transform:scaleX(0.96);transform-origin:0 0">Trust</span></div>
<div class="a td" style="left:2168px;top:676.5px"><span class="lat" style="display:inline-block;transform:scaleX(0.97);transform-origin:0 0">172.16.10.18</span></div>
<div class="a td" style="left:2374px;top:676.5px"><span class="lat" style="display:inline-block;transform:scaleX(0.958);transform-origin:0 0">172.16.3.23</span></div>
<div class="a td" style="left:2580px;top:676.5px"><span class="lat" style="display:inline-block;transform:scaleX(1.16);transform-origin:0 0">http</span></div>
<div class="a td" style="left:2786px;top:676.5px"><span class="lat" style="display:inline-block;transform:scaleX(0.877);transform-origin:0 0">TCP</span></div>
<div class="a td" style="left:2992px;top:676.5px"><span class="lat" style="display:inline-block;transform:scaleX(1.057);transform-origin:0 0">default</span></div>
<svg class="a" style="left:516px;top:1520px" width="80" height="26" viewBox="0 0 80 26">
<g fill="none" stroke="#CDCDCD" stroke-width="3.6"><path d="M4,2 V20"/><path d="M9,11 H30 M16.5,3.5 L9,11 L16.5,18.5"/><path d="M52,11 H74 M59.5,3.5 L52,11 L59.5,18.5"/></g></svg>
<div class="a" style="left:608px;top:1524px;width:4px;height:28px;background:#EEEEEE"></div>
<div class="a pg" style="left:623.5px">第</div>
<div class="a" style="left:664px;top:1508px;width:100px;height:60px;border:2px solid #C9D3E8;background:#fff"></div>
<div class="a pg" style="left:682px;top:1521px;font-size:26px;color:#111">1</div>
<div class="a pg" style="left:779px">页，共 <span class="lat">1</span> 页</div>
<div class="a" style="left:918px;top:1524px;width:4px;height:28px;background:#EEEEEE"></div>
<svg class="a" style="left:930px;top:1520px" width="84" height="26" viewBox="0 0 84 26">
<g fill="none" stroke="#CDCDCD" stroke-width="3.6"><path d="M2,11 H24 M16.5,3.5 L24,11 L16.5,18.5"/><path d="M50,11 H71 M63.5,3.5 L71,11 L63.5,18.5"/><path d="M76,2 V20"/></g></svg>
<div class="a" style="left:1022px;top:1524px;width:4px;height:28px;background:#EEEEEE"></div>
<div class="a pg" style="left:1037px">每页显示条数</div>
<div class="a pg" style="left:1207px"><span class="lat" style="font-size:26px;color:#222">25</span></div>
<svg class="a" style="left:1256px;top:1535px" width="11" height="7" viewBox="0 0 11 7"><path d="M0,0H11L5.5,6.5Z" fill="#222"/></svg>
<div class="a pg" style="left:2922px">显示 <span class="lat">1 - 6</span>条，共 <span class="lat">6</span> 条</div>
<div id="footer" class="a"></div>
<div id="foottxt" class="a"><span style="font-size:30.5px">Copyright© 2004-2019 </span>新华三技术有限公司 版权所有，保留一切权利</div>
</body></html>
